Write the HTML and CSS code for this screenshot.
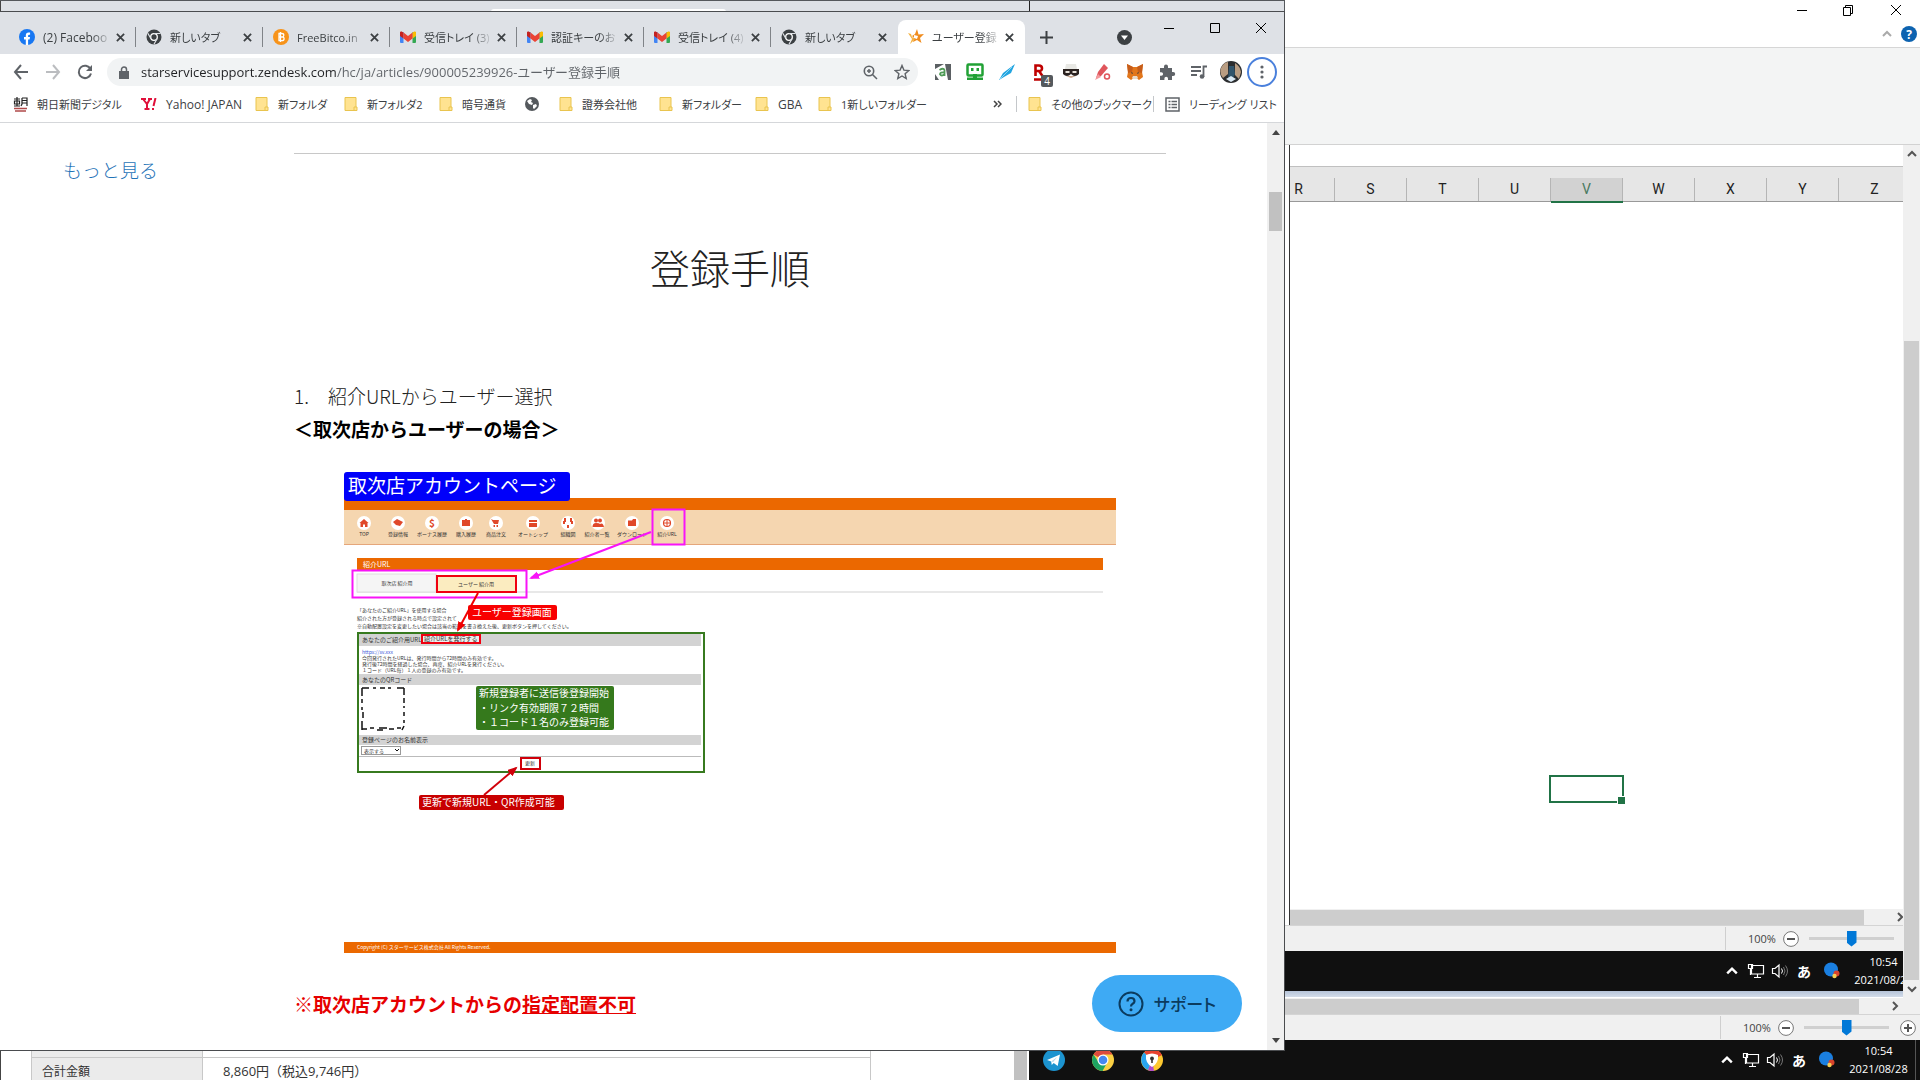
FILE: index.html
```html
<!DOCTYPE html>
<html lang="ja">

<head>
  <meta charset="UTF-8">
  <meta name="viewport" content="width=device-width, initial-scale=1.0">
  <title>ユーザー登録手順</title>
  <link rel="stylesheet" href="styles.css">
</head>

<body>
  <!-- shared icons -->
  <svg class="defs" width="0" height="0">
    <symbol id="x" viewBox="0 0 10 10"><path d="M1 1l8 8M9 1l-8 8" fill="none" stroke="currentColor" stroke-width="2"/></symbol>
    <symbol id="winx" viewBox="0 0 12 12"><path d="M1 1l10 10M11 1L1 11" fill="none" stroke="#000"/></symbol>
    <symbol id="min" viewBox="0 0 12 12"><path d="M1 6.500h10" stroke="#000"/></symbol>
    <symbol id="max" viewBox="0 0 12 12"><path d="M1.500 1.500h9v9h-9z" fill="none" stroke="#000"/></symbol>
    <symbol id="chev" viewBox="0 0 10 10"><path d="M1 7l4-4 4 4" fill="none" stroke="currentColor" stroke-width="2"/></symbol>
    <symbol id="folder" viewBox="0 0 14 16"><path d="M1 1.500h11v13H1z" fill="#ffe391" stroke="#e9c44f"/><path d="M10 11h3v3.500h-3z" fill="#ffe391" stroke="#e9c44f"/></symbol>
    <symbol id="gmail" viewBox="0 0 16 12"><path d="M0 1h3.500v11H1a1 1 0 0 1-1-1z" fill="#4285f4"/><path d="M12.500 1H16v10a1 1 0 0 1-1 1h-2.500z" fill="#34a853"/><path d="M12.500 1.500L15 .3l1 1V5l-3.500 2.500z" fill="#fbbc04"/><path d="M0 5V1.300L1 .3l2.500 1.200v6z" fill="#c5221f"/><path d="M3.500 1.500L8 5l4.500-3.500v6L8 11 3.500 7.500z" fill="#ea4335"/></symbol>
    <symbol id="chromegray" viewBox="0 0 16 16"><circle cx="8" cy="8" r="7.500" fill="#3c4043"/><circle cx="8" cy="8" r="3.300" fill="#3c4043" stroke="#fff" stroke-width="1.300"/><path d="M8 4.500h6.500M5 9.800L1.800 4.200M11 9.800L8 15.300" stroke="#dee1e6" stroke-width="1.200"/></symbol>
    <symbol id="net" viewBox="0 0 18 16"><path d="M4.500 2.500h12v8.500h-12zM10.500 11v3M7 14.500h7M1.500 1.500h4v4h-4zM3.500 5.500V12" fill="none" stroke="#fff" stroke-width="1.200"/></symbol>
    <symbol id="vol" viewBox="0 0 18 16"><path d="M1.500 5.500h2.500L8 2v12L4 10.500H1.500z" fill="none" stroke="#fff" stroke-width="1.200"/><path d="M10.500 5.500q2 2.500 0 5" fill="none" stroke="#fff"/><path d="M12.500 4q3 4 0 8M14.500 2.500q4 5.500 0 11" fill="none" stroke="#777"/></symbol>
    <symbol id="ball" viewBox="0 0 18 18"><circle cx="8" cy="7.500" r="7" fill="#1a7fe0"/><circle cx="13.500" cy="11.500" r="3" fill="#d8432b"/><circle cx="11.500" cy="14" r="2.200" fill="#f7cf52"/></symbol>
    <symbol id="minus" viewBox="0 0 16 16"><circle cx="8" cy="8" r="7.400" fill="#fff" stroke="#777"/><path d="M4 8h8" stroke="#555" stroke-width="2"/></symbol>
    <symbol id="plus" viewBox="0 0 16 16"><circle cx="8" cy="8" r="7.400" fill="#fff" stroke="#777"/><path d="M4 8h8M8 4v8" stroke="#555" stroke-width="2"/></symbol>
  </svg>

  <!-- spreadsheet -->
  <section class="excel">
    <header class="excel-title">
      <div class="excel-controls">
        <button aria-label="最小化"><svg width="12" height="12"><use href="#min"/></svg></button>
        <button aria-label="元に戻す"><svg width="12" height="12" viewBox="0 0 12 12"><path d="M1.500 3.500h7v8h-7zM3.500 3.500v-2h7v8h-2" fill="none" stroke="#000"/></svg></button>
        <button aria-label="閉じる"><svg width="12" height="12"><use href="#winx"/></svg></button>
      </div>
      <div class="excel-help">
        <svg class="light" width="10" height="10"><use href="#chev"/></svg>
        <button class="help">?</button>
      </div>
    </header>
    <div class="ribbon"></div>
    <div class="excel-main">
      <div class="capture">
        <div class="capture-inner">
          <div class="sheet">
            <div class="formula"></div>
            <ul class="cols">
              <li>R</li>
              <li>S</li>
              <li>T</li>
              <li>U</li>
              <li class="sel">V</li>
              <li>W</li>
              <li>X</li>
              <li>Y</li>
              <li>Z</li>
            </ul>
            <div class="cells"><div class="cell-cursor"></div></div>
          </div>
          <div class="hscroll"><div class="hthumb"></div><svg width="10" height="10"><use href="#chev"/></svg></div>
          <div class="status">
            <div class="zoom">
              <label for="zoom1">100%</label>
              <button aria-label="縮小"><svg width="16" height="16"><use href="#minus"/></svg></button>
              <input type="range" id="zoom1">
              <button aria-label="拡大"><svg width="16" height="16"><use href="#plus"/></svg></button>
            </div>
          </div>
          <div class="taskbar">
            <div class="tray">
              <svg class="tray-chev" width="12" height="12"><use href="#chev"/></svg>
              <svg width="18" height="16"><use href="#net"/></svg>
              <svg width="18" height="16"><use href="#vol"/></svg>
              <span class="ime">あ</span>
              <svg class="ball" width="18" height="18"><use href="#ball"/></svg>
              <p class="clock">10:54<br>2021/08/28</p>
            </div>
          </div>
          <div class="strip"></div>
        </div>
      </div>
      <div class="vscroll">
        <svg width="10" height="10"><use href="#chev"/></svg>
        <div class="vthumb"></div>
        <svg class="down" width="10" height="10"><use href="#chev"/></svg>
      </div>
    </div>
    <div class="hscroll"><div class="hthumb"></div><svg width="10" height="10"><use href="#chev"/></svg></div>
    <div class="status">
      <div class="zoom">
        <label for="zoom2">100%</label>
        <button aria-label="縮小"><svg width="16" height="16"><use href="#minus"/></svg></button>
        <input type="range" id="zoom2">
        <button aria-label="拡大"><svg width="16" height="16"><use href="#plus"/></svg></button>
      </div>
    </div>
    <div class="taskbar">
      <div class="apps">
        <button aria-label="Telegram"><svg width="22" height="22" viewBox="0 0 22 22"><circle cx="11" cy="11" r="11" fill="#1c93cf"/><path d="M4 11l13-5.500-2.300 11.500-4-3-2 2-.5-3.500z" fill="#fff"/><path d="M8.200 12.500l6-4.500-4 5z" fill="#b7d8ea"/></svg></button>
        <button aria-label="Chrome"><svg width="22" height="22" viewBox="0 0 22 22"><circle cx="11" cy="11" r="11" fill="#fbd043"/><path d="M11 11L1.500 5.500A11 11 0 0 1 20.500 5.500H11z" fill="#dd4b3e"/><path d="M1.500 5.500A11 11 0 0 0 10.500 22L15.500 13 11 11 6.500 13z" fill="#1da362"/><circle cx="11" cy="11" r="5.500" fill="#fff"/><circle cx="11" cy="11" r="4.300" fill="#4688f1"/></svg></button>
        <button aria-label="セキュリティ"><svg width="22" height="22" viewBox="0 0 22 22"><circle cx="11" cy="11" r="11" fill="#fdc830"/><path d="M11 11L3 3.500A11 11 0 0 1 21 6z" fill="#e8432f"/><path d="M11 11L3 3.500A11 11 0 0 0 7 21z" fill="#28a5f0"/><path d="M11 11L7 21.200A11 11 0 0 0 13 21.800z" fill="#b04ad0"/><path d="M5 6q6-3 12 0 1 8-6 12-7-4-6-12z" fill="#fff"/><circle cx="11" cy="9.500" r="1.900" fill="#333"/><path d="M10.200 10h1.600v4h-1.600z" fill="#333"/></svg></button>
      </div>
      <div class="tray">
        <svg class="tray-chev" width="12" height="12"><use href="#chev"/></svg>
        <svg width="18" height="16"><use href="#net"/></svg>
        <svg width="18" height="16"><use href="#vol"/></svg>
        <span class="ime">あ</span>
        <svg class="ball" width="18" height="18"><use href="#ball"/></svg>
        <p class="clock">10:54<br>2021/08/28</p>
      </div>
    </div>
  </section>

  <!-- order page below the browser -->
  <section class="order">
    <table>
      <tr class="cut"><th></th><td></td></tr>
      <tr><th>合計金額</th><td>8,860円（税込9,746円）</td></tr>
    </table>
    <div class="order-scroll"></div>
  </section>

  <div class="behind"><div class="behind-left"><div class="behind-tab"></div></div></div>

  <!-- browser -->
  <section class="browser">
    <div class="tabstrip">
      <div class="tab"><svg width="16" height="16" viewBox="0 0 16 16"><circle cx="8" cy="8" r="8" fill="#1877f2"/><path d="M6.800 16v-5.500H5V8h1.800V6.500Q6.800 3.500 9.500 3.500h1.600v2.200h-1q-1 0-1 1V8H11l-.4 2.500H9.100V16z" fill="#fff"/></svg><a href="#" class="en">(2) Facebook</a><button aria-label="閉じる"><svg width="9" height="9"><use href="#x"/></svg></button></div>
      <div class="tab"><svg width="16" height="16"><use href="#chromegray"/></svg><a href="#">新しいタブ</a><button aria-label="閉じる"><svg width="9" height="9"><use href="#x"/></svg></button></div>
      <div class="tab"><svg width="16" height="16" viewBox="0 0 16 16"><circle cx="8" cy="8" r="8" fill="#f7931a"/><path d="M6 4.500h2.800q2 0 2 1.700 0 1.300-1.200 1.600 1.500.3 1.500 1.900 0 1.900-2.300 1.900H6zM7.500 3v10M6.500 8h3" fill="none" stroke="#fff" stroke-width="1.300"/></svg><a href="#">FreeBitco.in</a><button aria-label="閉じる"><svg width="9" height="9"><use href="#x"/></svg></button></div>
      <div class="tab"><svg width="16" height="12"><use href="#gmail"/></svg><a href="#">受信トレイ (3)</a><button aria-label="閉じる"><svg width="9" height="9"><use href="#x"/></svg></button></div>
      <div class="tab"><svg width="16" height="12"><use href="#gmail"/></svg><a href="#">認証キーのお</a><button aria-label="閉じる"><svg width="9" height="9"><use href="#x"/></svg></button></div>
      <div class="tab"><svg width="16" height="12"><use href="#gmail"/></svg><a href="#">受信トレイ (4)</a><button aria-label="閉じる"><svg width="9" height="9"><use href="#x"/></svg></button></div>
      <div class="tab last"><svg width="16" height="16"><use href="#chromegray"/></svg><a href="#">新しいタブ</a><button aria-label="閉じる"><svg width="9" height="9"><use href="#x"/></svg></button></div>
      <div class="tab active"><svg width="16" height="16" viewBox="0 0 16 16"><path d="M7 5L9 0l1.500 5.500L16 5l-4 4 1.500 5L9 11l-4 2 1-4-2-2z" fill="#f08c1e"/><path d="M0 4l3 1 1 3 3 2-5 5 2-5z" fill="#f5b342"/><path d="M6 6l4 1-1 3-3-1z" fill="#fff"/></svg><a href="#">ユーザー登録</a><button aria-label="閉じる"><svg width="9" height="9"><use href="#x"/></svg></button></div>
      <button class="newtab" aria-label="新しいタブ"><svg width="13" height="13" viewBox="0 0 13 13"><path d="M6.500 0v13M0 6.500h13" stroke="#3c4043" stroke-width="2"/></svg></button>
      <button class="tabsearch" aria-label="タブを検索"><svg width="15" height="15" viewBox="0 0 15 15"><circle cx="7.500" cy="7.500" r="7.500" fill="#3c4043"/><path d="M4 5.500h7L7.500 10z" fill="#fff"/></svg></button>
      <div class="controls">
        <button aria-label="最小化"><svg width="12" height="12"><use href="#min"/></svg></button>
        <button aria-label="最大化"><svg width="12" height="12"><use href="#max"/></svg></button>
        <button aria-label="閉じる"><svg width="12" height="12"><use href="#winx"/></svg></button>
      </div>
    </div>

    <div class="toolbar">
      <button aria-label="戻る"><svg width="16" height="16" viewBox="0 0 16 16"><path d="M8 1L2 8l6 7M2 8h13" fill="none" stroke="#5f6368" stroke-width="2"/></svg></button>
      <button aria-label="進む"><svg width="16" height="16" viewBox="0 0 16 16"><path d="M8 1l6 7-6 7M14 8H1" fill="none" stroke="#bbbdc0" stroke-width="2"/></svg></button>
      <button aria-label="再読み込み"><svg width="16" height="16" viewBox="0 0 16 16"><path d="M13.500 5A6.200 6.200 0 1 0 14 9.500" fill="none" stroke="#5f6368" stroke-width="2"/><path d="M15 1v6H9z" fill="#5f6368"/></svg></button>
      <div class="omnibox">
        <svg width="10" height="13" viewBox="0 0 10 13"><path d="M0 5h10v8H0z" fill="#5f6368"/><path d="M2.500 5.500V3.500a2.500 2.500 0 0 1 5 0v2" fill="none" stroke="#5f6368" stroke-width="1.500"/></svg>
        <input type="text" aria-label="アドレス" value="starservicesupport.zendesk.com/hc/ja/articles/900005239926-ユーザー登録手順">
        <button aria-label="ズーム"><svg width="15" height="15" viewBox="0 0 15 15"><circle cx="6" cy="6" r="4.700" fill="none" stroke="#5f6368" stroke-width="1.600"/><path d="M9.500 9.500l4.500 4.500M4 6h4M6 4v4" stroke="#5f6368" stroke-width="1.500"/></svg></button>
        <button aria-label="ブックマーク"><svg width="16" height="16" viewBox="0 0 16 16"><path d="M8 1.500l1.900 4.600 4.900.4-3.700 3.200 1.100 4.800L8 12l-4.200 2.500 1.100-4.800L1.200 6.500l4.900-.4z" fill="none" stroke="#5f6368" stroke-width="1.400"/></svg></button>
      </div>
      <div class="exts">
        <button aria-label="alexa"><svg width="18" height="18" viewBox="0 0 18 18"><path d="M1 1h9L1 6zM11 1h6v16h-3zM1 11l4 6H1z" fill="#5b6063"/><path d="M5.500 7q4-2.500 5 0v6M10.500 9.500Q6 9 6 11.300q1.500 2.500 4.500 0" fill="none" stroke="#4f9b57" stroke-width="1.800"/></svg></button>
        <button aria-label="RoboForm"><svg width="18" height="18" viewBox="0 0 18 18"><rect x="1.500" y="1.500" width="15" height="11" rx="1" fill="#fff" stroke="#21a135" stroke-width="2.500"/><path d="M5 5h2.500v3H5zM10.500 5H13v3h-2.500z" fill="#21a135"/><path d="M1 14.500h16v2.500H1zM7 11h4v4H7z" fill="#21a135"/></svg></button>
        <button aria-label="feather"><svg width="18" height="18" viewBox="0 0 18 18"><path d="M1 17L5 10 17 1l-4 9-7 4z" fill="#23a5e0"/><path d="M1 17L14 4" stroke="#8ad4f5"/></svg></button>
        <button class="rakuten" aria-label="Rakuten"><svg width="18" height="18" viewBox="0 0 18 18"><path d="M5.500 13V2.500H9q3 0 3 2.800T9 8H5.500M9 8l3.500 5M4 16.500h9" fill="none" stroke="#bf0000" stroke-width="2.600"/></svg><span>4</span></button>
        <button aria-label="匿名"><svg width="18" height="18" viewBox="0 0 18 18"><path d="M4 1h10l1 5H3z" fill="#e8e8e4"/><path d="M1 6h16v5q-4 4-8 0-4 4-8 0z" fill="#2b2220"/><path d="M3.500 8h4v2h-4zM10.500 8h4v2h-4z" fill="#e7e1da"/><path d="M4 13h10l-5 2z" fill="#c9a68e"/></svg></button>
        <button aria-label="ペン"><svg width="18" height="18" viewBox="0 0 18 18"><path d="M10 1l4 4-7 8-5 2 2-6z" fill="#e0565c"/><path d="M1 17l3-6 3 3z" fill="#f3999c"/><circle cx="13" cy="13.500" r="2.500" fill="#fff" stroke="#e0565c" stroke-width="1.500"/></svg></button>
        <button aria-label="MetaMask"><svg width="18" height="18" viewBox="0 0 18 18"><path d="M1 1l6 3h4l6-3-1 8 1 5-4 3-2-1.500H7L5 17l-4-3 1-5z" fill="#e2761b"/><path d="M1 1l6 3-1 5-4 1zM17 1l-6 3 1 5 4 1z" fill="#c65d1a"/><path d="M7 13h4l1 2-1 1H7l-1-1z" fill="#e9d9c9"/><path d="M5 9l2 1-1 1zM13 9l-2 1 1 1z" fill="#233447"/></svg></button>
        <button aria-label="拡張機能"><svg width="18" height="18" viewBox="0 0 18 18"><path d="M2 5h4V3.500a2 2 0 0 1 4 0V5h4v4h1.200a2 2 0 0 1 0 4H14v4h-4v-1.500a1.800 1.800 0 0 0-3.600 0V17H2v-4.200h1.300a1.800 1.800 0 0 0 0-3.600H2z" fill="#5f6368"/></svg></button>
        <button aria-label="メディア"><svg width="18" height="18" viewBox="0 0 18 18"><path d="M1 4h10M1 8h10M1 12h6M13.500 14V3.500H17" fill="none" stroke="#5f6368" stroke-width="1.800"/><circle cx="12" cy="13.500" r="2.300" fill="#5f6368"/></svg></button>
        <button aria-label="プロフィール"><svg width="22" height="22" viewBox="0 0 22 22"><circle cx="11" cy="11" r="11" fill="#2b2d2f"/><path d="M1 7q3-6 7-6v12l-5 4q-4-5-2-10zM15 2q5 3 6 9l-2 7-4-4z" fill="#b99d82"/><path d="M9 5h5l1 8-3 6H8z" fill="#31556c"/><path d="M6 18l5-3 5 3-5 3z" fill="#dbeaf5"/></svg></button>
        <button class="menu" aria-label="メニュー"><svg width="4" height="14" viewBox="0 0 4 14"><circle cx="2" cy="2" r="1.600" fill="#5f6368"/><circle cx="2" cy="7" r="1.600" fill="#5f6368"/><circle cx="2" cy="12" r="1.600" fill="#5f6368"/></svg></button>
      </div>
    </div>

    <nav class="bookmarks">
      <a href="#"><svg width="15" height="15" viewBox="0 0 15 15"><path d="M1 2h6M4 0v9M1.500 4h5v3h-5zM1 9h6M9 1h5v8M9 1v6l-1 2M9 3.500h5M9 6h5" fill="none" stroke="#222" stroke-width="1.200"/><path d="M1 11.500h13M2 14h11" stroke="#b04a4a" stroke-width="1.500"/></svg>朝日新聞デジタル</a>
      <a href="#" class="en"><svg width="16" height="12" viewBox="0 0 16 12"><path d="M0 1h5M7 1h4M2 1l4 5 3-5M6 6v5M3.500 11h5" fill="none" stroke="#e0103a" stroke-width="2"/><path d="M14.500 0l-2 8M12 10v2" stroke="#e0103a" stroke-width="2"/></svg>Yahoo! JAPAN</a>
      <a href="#"><svg width="14" height="16"><use href="#folder"/></svg>新フォルダ</a>
      <a href="#"><svg width="14" height="16"><use href="#folder"/></svg>新フォルダ2</a>
      <a href="#"><svg width="14" height="16"><use href="#folder"/></svg>暗号通貨</a>
      <a href="#" aria-label="サイト"><svg width="14" height="14" viewBox="0 0 14 14"><circle cx="7" cy="7" r="7" fill="#55595d"/><path d="M2 4l3-2 2 1-1 2 2 1-1 2-3-1zM8 8l3-1 1 2-3 3-1-1z" fill="#fff"/></svg></a>
      <a href="#"><svg width="14" height="16"><use href="#folder"/></svg>證券会社他</a>
      <a href="#"><svg width="14" height="16"><use href="#folder"/></svg>新フォルダー</a>
      <a href="#" class="en"><svg width="14" height="16"><use href="#folder"/></svg>GBA</a>
      <a href="#"><svg width="14" height="16"><use href="#folder"/></svg>1新しいフォルダー</a>
      <button class="more" aria-label="他のブックマーク"><svg width="9" height="8" viewBox="0 0 9 8"><path d="M1 1l3 3-3 3M5 1l3 3-3 3" fill="none" stroke="#444" stroke-width="1.500"/></svg></button>
      <a href="#" class="split"><svg width="14" height="16"><use href="#folder"/></svg>その他のブックマーク</a>
      <a href="#" class="split"><svg width="15" height="15" viewBox="0 0 15 15"><path d="M1 1h13v13H1z" fill="none" stroke="#5f6368" stroke-width="1.500"/><path d="M3.500 4.500h2M3.500 7.500h2M3.500 10.500h2M6.500 4.500H12M6.500 7.500H12M6.500 10.500H12" stroke="#5f6368" stroke-width="1.500"/></svg>リーディング リスト</a>
    </nav>

    <div class="view">
      <main class="page">
        <aside><a href="#">もっと見る</a></aside>
        <article>
          <hr>
          <h1>登録手順</h1>
          <p>1.　紹介URLからユーザー選択</p>
          <p class="strong">＜取次店からユーザーの場合＞</p>
          <svg class="figure" viewBox="0 0 772 482">
            <defs>
              <marker id="am" markerWidth="12" markerHeight="10" refX="8" refY="4" orient="auto" markerUnits="userSpaceOnUse"><path d="M0 0l10 4-10 4z" fill="#f814f8"/></marker>
              <marker id="ar" markerWidth="12" markerHeight="10" refX="8" refY="4" orient="auto" markerUnits="userSpaceOnUse"><path d="M0 0l10 4-10 4z" fill="#f00000"/></marker>
              <marker id="ad" markerWidth="12" markerHeight="10" refX="8" refY="4" orient="auto" markerUnits="userSpaceOnUse"><path d="M0 0l10 4-10 4z" fill="#d0000a"/></marker>
            </defs>
            <path d="M0 27h772v12H0z" fill="#eb6800"/>
            <path d="M0 39h772v34H0z" fill="#f5d6b0"/>
            <path d="M0 73.500h772" stroke="#e5a67a"/>
            <rect x="0" y="1" width="226" height="29" rx="3" fill="#0000fa"/>
            <text class="big" x="4" y="22">取次店アカウントページ</text>
            <g fill="#fff">
              <circle cx="20" cy="52" r="7"/><circle cx="54" cy="52" r="7"/><circle cx="88" cy="52" r="7"/><circle cx="122" cy="52" r="7"/><circle cx="152" cy="52" r="7"/><circle cx="189" cy="52" r="7"/><circle cx="224" cy="52" r="7"/><circle cx="254" cy="52" r="7"/><circle cx="288" cy="52" r="7"/><circle cx="323" cy="52" r="7"/>
            </g>
            <g fill="#e0482a">
              <path d="M15.500 52l4.500-4 4.500 4h-1v4h-2.500v-2.500h-2V56h-2.500v-4z"/>
              <path d="M49 51l4-3 6 3-3 4-4-1z"/>
              <path d="M118 49h3v-1h2v1h3v6h-8z"/>
              <path d="M147 48l2 1h6l-1 4h-4zM149.500 54h1.500v2h-1.500zM152.500 54h1.500v2h-1.500z"/>
              <path d="M185 49h8v2h-8zM185 52h8v4h-8z"/>
              <path d="M220 47h2v4h-2zM226 47h2v4h-2zM223 54h2v3h-2zM219 50h2v3h-2zM227 50h2v3h-2z"/>
              <circle cx="252" cy="49.500" r="2"/><circle cx="256" cy="49.500" r="2"/><path d="M248.500 56q0-4 3.500-4t4 1q3-2 4 3z"/>
              <path d="M284 49.500h4l1-1.500h3v7h-8z"/>
            </g>
            <circle cx="323" cy="52" r="3.500" fill="none" stroke="#e0482a" stroke-width="1.200"/><path d="M319.500 52h7M323 48.500v7" stroke="#e0482a"/>
            <text class="dollar" x="88" y="56">$</text>
            <g class="nav">
              <text x="20" y="65">TOP</text><text x="54" y="65">登録情報</text><text x="88" y="65">ボーナス履歴</text><text x="122" y="65">購入履歴</text><text x="152" y="65">商品注文</text><text x="189" y="65">オートシップ</text><text x="224" y="65">組織図</text><text x="253" y="65">紹介者一覧</text><text x="288" y="65">ダウンロード</text><text x="323" y="65">紹介URL</text>
            </g>
            <rect x="13" y="87" width="746" height="12" fill="#eb6800"/>
            <text class="wh7" x="19" y="96">紹介URL</text>
            <path d="M13 121h746" stroke="#e8e8e8" stroke-width="2"/>
            <rect x="13" y="103" width="79" height="18" fill="#f5f5f5" stroke="#ddd"/>
            <rect x="93" y="105" width="79" height="16" fill="#fbecc0" stroke="#f00010" stroke-width="2"/>
            <g class="nav"><text x="53" y="114">取次店 紹介用</text><text x="132" y="115">ユーザー 紹介用</text></g>
            <path d="M308.500 38.500h32v35h-32zM8.500 99.500h174v27H8.500z" fill="none" stroke="#f814f8" stroke-width="2"/>
            <path d="M307 61L187 107" stroke="#f814f8" stroke-width="2" marker-end="url(#am)"/>
            <g class="small">
              <text x="13" y="141">「あなたのご紹介URL」を使用する場合</text>
              <text x="13" y="149">紹介された方が登録される時点で設定されて</text>
              <text x="13" y="157">※自動配置設定を変更したい場合は該当の範囲を書き換えた後、更新ボタンを押してください。</text>
            </g>
            <rect x="124" y="134" width="89" height="15" rx="2" fill="#f80000"/>
            <text class="label" x="128" y="145">ユーザー登録画面</text>
            <rect x="14" y="162" width="346" height="139" fill="#fff" stroke="#377a1f" stroke-width="2"/>
            <path d="M15 163h342v12H15zM15 203h342v11H15zM15 264h342v10H15z" fill="#d3d3d3"/>
            <g class="head"><text x="18" y="171">あなたのご紹介用URL</text><text x="18" y="211">あなたのQRコード</text><text x="18" y="271">登録ページのお名前表示</text></g>
            <rect x="78" y="164" width="58" height="8" fill="#eee" stroke="#f00010" stroke-width="2"/>
            <text class="head" x="80" y="170">紹介URLを発行する</text>
            <path d="M134 122l-20 37" stroke="#f00000" stroke-width="2" marker-end="url(#ar)"/>
            <g class="small">
              <text class="link" x="18" y="183">https://sv.xxx</text>
              <text x="18" y="189">今回発行されたURLは、発行時間から72時間のみ有効です。</text>
              <text x="18" y="195">発行後72時間を経過した場合、再度、紹介URLを発行ください。</text>
              <text x="18" y="201">１コード（URL毎）１人の登録のみ有効です。</text>
            </g>
            <path d="M18 217h7M29 217h3M36 217h5M44 217h3M53 217h7M60 217v7M60 227v5M60 235v2M60 241v4M60 249v3M60 255l-2 4M18 217v8M18 228v4M18 236v3M19 241v6M18 250v9M18 258h5M26 257h4M33 259h6M35 257h8M45 258h5M53 257h4" fill="none" stroke="#111" stroke-width="1.500"/>
            <rect x="132" y="215" width="138" height="44" rx="2" fill="#35791c"/>
            <g class="label"><text x="135" y="226">新規登録者に送信後登録開始</text><text x="135" y="241">・リンク有効期限７２時間</text><text x="135" y="255">・１コード１名のみ登録可能</text></g>
            <rect x="17.500" y="275.500" width="39" height="8" fill="#fff" stroke="#999"/>
            <text class="small" x="20" y="282">表示する</text>
            <path d="M51 278l2 2 2-2" fill="none" stroke="#111"/>
            <path d="M15 285.500h342" stroke="#bbb"/>
            <rect x="177" y="287" width="19" height="11" fill="#fff" stroke="#d0000a" stroke-width="2"/>
            <text class="small" x="181" y="294">更新</text>
            <path d="M140 324l32-27" stroke="#d0000a" stroke-width="2" marker-end="url(#ad)"/>
            <rect x="75" y="324" width="145" height="15" rx="2" fill="#c80000"/>
            <text class="label" x="78" y="335">更新で新規URL・QR作成可能</text>
            <path d="M0 471h772v11H0z" fill="#eb6800"/>
            <text class="copy" x="13" y="478">Copyright (C) スターサービス株式会社 All Rights Reserved.</text>
          </svg>
          <p class="strong red">※取次店アカウントからの<u>指定配置不可</u></p>
        </article>
        <button class="support"><svg width="26" height="26" viewBox="0 0 26 26"><circle cx="13" cy="13" r="11.500" fill="none" stroke="#0b3b5e" stroke-width="2"/><path d="M9.500 10.500Q9.500 7 13 7t3.500 3.200q0 1.500-1.800 2.600T13 15.500" fill="none" stroke="#0b3b5e" stroke-width="2.200"/><circle cx="13" cy="18.800" r="1.500" fill="#0b3b5e"/></svg>サポート</button>
      </main>
      <div class="page-scroll">
        <svg width="8" height="5" viewBox="0 0 8 5"><path d="M0 5l4-5 4 5z" fill="#444"/></svg>
        <div class="page-thumb"></div>
        <svg class="down" width="8" height="5" viewBox="0 0 8 5"><path d="M0 5l4-5 4 5z" fill="#444"/></svg>
      </div>
    </div>
  </section>
</body>

</html>
```
FILE: styles.css
```css
* {
  margin: 0;
  padding: 0;
  box-sizing: border-box;
}

body {
  position: relative;
  height: 100vh;
  overflow: hidden;
  background: #fff;
  font-family: "Open Sans", "Noto Sans CJK JP", sans-serif;
  font-size: 12px;
  color: #3c4043;
}

ul {
  list-style: none;
}

a {
  color: inherit;
  text-decoration: none;
}

button {
  border: 0;
  background: none;
  font: inherit;
  color: inherit;
  display: flex;
  align-items: center;
  justify-content: center;
}

svg {
  flex: none;
  display: block;
}

.defs {
  position: absolute;
}

.down {
  transform: rotate(180deg);
}

/* windows */
.browser {
  position: absolute;
  left: 0;
  top: 11px;
  bottom: 29px;
  width: 1285px;
  display: flex;
  flex-direction: column;
  background: #fff;
  border: 1px solid #4a4c4f;
  border-left: 0;
}

.excel {
  position: absolute;
  left: 1029px;
  right: 0;
  top: 0;
  bottom: 0;
  display: flex;
  flex-direction: column;
  background: #fff;
}

.order {
  position: absolute;
  left: 0;
  bottom: 0;
  width: 1029px;
  height: 30px;
  display: flex;
  justify-content: space-between;
  overflow: hidden;
  background: #fff;
  border-left: 1px solid #444;
}

.behind {
  position: absolute;
  left: 0;
  top: 0;
  width: 1285px;
  height: 12px;
  background: #dee1e6;
  border-top: 1px solid #55585c;
  border-right: 1px solid #55585c;
}

.behind-left {
  width: 1030px;
  height: 11px;
  padding: 8px 0 0 490px;
  border-right: 1px solid #222;
  border-left: 1px solid #444;
}

.behind-tab {
  width: 235px;
  height: 3px;
  background: #fff;
  border-radius: 3px 3px 0 0;
}

/* tabs */
.tabstrip {
  display: flex;
  height: 42px;
  padding: 8px 0 0 9px;
  background: #dee1e6;
}

.tab {
  flex: none;
  width: 127px;
  height: 34px;
  display: flex;
  align-items: center;
  gap: 8px;
  padding: 0 11px 0 10px;
  background: linear-gradient(#808388, #808388) right center / 1px 20px no-repeat;
}

.tab.last {
  background: none;
}

.tab a {
  flex: 1;
  overflow: hidden;
  white-space: nowrap;
  font-size: 11px;
  font-feature-settings: "palt";
  -webkit-mask-image: linear-gradient(90deg, #000 75%, rgba(0, 0, 0, .2));
  mask-image: linear-gradient(90deg, #000 75%, rgba(0, 0, 0, .2));
}

.tab .en,
.bookmarks .en {
  font-size: 12px;
}

.tab.active {
  background: #fff;
  border-radius: 8px 8px 0 0;
}

.newtab {
  width: 42px;
}

.tabsearch {
  width: 30px;
  margin-left: 42px;
}

.controls {
  display: flex;
  height: 16px;
  margin-left: auto;
}

.controls button {
  width: 46px;
}

/* toolbar */
.toolbar {
  display: flex;
  align-items: center;
  height: 36px;
  padding: 0 7px 0 5px;
}

.toolbar button {
  width: 32px;
  height: 30px;
}

.omnibox {
  flex: 1;
  display: flex;
  align-items: center;
  gap: 12px;
  height: 28px;
  margin: 0 9px 0 6px;
  padding-left: 12px;
  border-radius: 14px;
  background: #f1f3f4;
}

.omnibox button {
  margin-left: -12px;
}

.omnibox input {
  flex: 1;
  min-width: 0;
  height: 24px;
  padding-bottom: 2px;
  border: 0;
  outline: 0;
  font: 13px "Open Sans", "Noto Sans CJK JP", sans-serif;
  font-feature-settings: "palt";
  color: transparent;
  background: linear-gradient(90deg, #202124 196px, #5f6368 196px);
  -webkit-background-clip: text;
  background-clip: text;
}

.exts {
  display: flex;
}

.rakuten {
  position: relative;
}

.rakuten span {
  position: absolute;
  right: 2px;
  bottom: 0;
  width: 12px;
  line-height: 12px;
  border-radius: 2px;
  background: #55595d;
  color: #fff;
  font-size: 10px;
}

.toolbar .menu {
  width: 30px;
  border: 2px solid #4a80dc;
  border-radius: 50%;
}

.bookmarks {
  display: grid;
  grid-template-columns: 128px 114px 89px 95px 86px 34px 100px 96px 63px 160px 38px 137px 1fr;
  align-items: center;
  height: 33px;
  padding: 0 0 4px 13px;
  border-bottom: 1px solid #d5d7da;
  white-space: nowrap;
  font-size: 11px;
  font-feature-settings: "palt";
}

.bookmarks a {
  display: flex;
  align-items: center;
  gap: 9px;
}

.bookmarks .split {
  padding-left: 11px;
  border-left: 1px solid #c4c7ca;
}

/* article */
.view {
  flex: 1;
  min-height: 0;
  display: flex;
}

.page {
  flex: 1;
  position: relative;
  display: flex;
  overflow: hidden;
  font-family: "Noto Sans CJK JP", sans-serif;
  font-size: 19px;
  line-height: 33px;
}

.page aside {
  width: 294px;
  padding: 30px 0 0 63px;
  color: #1f73b7;
  font-weight: 300;
}

.page article {
  width: 872px;
  padding-top: 30px;
  color: #222;
  font-weight: 300;
}

.page hr {
  border: 0;
  border-top: 1px solid #c8c8c8;
}

.page h1 {
  margin: 83px 0 82px;
  font-size: 40px;
  line-height: 60px;
  font-weight: 300;
  text-align: center;
}

.page .strong {
  font-weight: bold;
  color: #000;
}

.page .red {
  margin-top: 34px;
  color: #e60000;
}

.figure {
  width: 772px;
  margin: 26px 0 0 50px;
}

.figure text {
  font-family: "Noto Sans CJK JP", sans-serif;
  font-weight: 400;
  fill: #333;
}

.figure .big {
  font-size: 19px;
  fill: #fff;
}

.figure .label,
.figure .label text {
  font-size: 10px;
  fill: #fff;
}

.figure .nav text {
  font-size: 5px;
  text-anchor: middle;
}

.figure .small,
.figure .small text {
  font-size: 5px;
}

.figure .head,
.figure .head text {
  font-size: 6px;
}

.figure .wh7 {
  font-size: 7px;
  fill: #fff;
}

.figure .copy {
  font-size: 5px;
  fill: #fff;
}

.figure .dollar {
  font-size: 10px;
  font-weight: bold;
  text-anchor: middle;
  fill: #e0482a;
}

.figure .small .link {
  fill: #3b56d8;
}

.support {
  position: absolute;
  right: 25px;
  bottom: 18px;
  width: 150px;
  height: 57px;
  gap: 10px;
  border-radius: 29px;
  background: #3eaaf4;
  color: #0b3b5e;
  font-size: 17px;
  font-weight: 500;
  font-feature-settings: "palt";
}

.page-scroll {
  display: flex;
  flex-direction: column;
  align-items: center;
  width: 17px;
  padding: 7px 0;
  background: #f0f0f0;
}

.page-thumb {
  width: 13px;
  height: 39px;
  margin: 57px 0 auto;
  background: #c1c1c1;
}

/* excel */
.excel-title {
  height: 48px;
  border-bottom: 1px solid #d6d6d6;
}

.excel-controls {
  display: flex;
  justify-content: flex-end;
  height: 20px;
}

.excel-controls button {
  width: 46px;
}

.excel-controls button:last-child {
  width: 49px;
}

.excel-help {
  display: flex;
  align-items: center;
  justify-content: flex-end;
  gap: 9px;
  height: 28px;
  padding-right: 3px;
}

.light {
  color: #aaa;
}

.help {
  width: 16px;
  height: 16px;
  border-radius: 50%;
  background: #0d63b0;
  color: #fff;
  font-weight: bold;
}

.ribbon {
  height: 97px;
  background: #f3f4f4;
  border-bottom: 1px solid #d2d2d2;
}

.excel-main {
  flex: 1;
  min-height: 0;
  display: flex;
  padding-left: 256px;
}

.capture {
  flex: 1;
  min-width: 0;
  overflow: hidden;
}

/* the captured desktop is wider than its frame and is cut on the right */
.capture-inner {
  height: 100%;
  margin-right: -22px;
  display: flex;
  flex-direction: column;
}

.sheet {
  flex: 1;
  display: flex;
  flex-direction: column;
  margin-left: 4px;
  overflow: hidden;
  border-left: 1px solid #333;
}

.sheet + .hscroll {
  margin-left: 4px;
  border-left: 1px solid #333;
}

.formula {
  height: 21px;
}

.cols {
  display: flex;
  height: 36px;
  padding-top: 11px;
  background: #e6e6e6;
  border-top: 1px solid #c0c0c0;
  border-bottom: 1px solid #999;
}

.cols li {
  flex: none;
  width: 72px;
  line-height: 23px;
  text-align: center;
  font-size: 14px;
  font-family: Roboto, sans-serif;
  color: #222;
  border-right: 1px solid #b5b5b5;
}

.cols li:first-child {
  margin-left: -27px;
}

.cols .sel {
  background: #d2d2d2;
  color: #4a7a61;
  box-shadow: 0 2px #217346;
}

.cells {
  flex: 1;
  padding: 573px 0 0 259px;
}

.cell-cursor {
  position: relative;
  width: 75px;
  height: 28px;
  border: 2px solid #217346;
}

.cell-cursor::after {
  content: "";
  position: absolute;
  right: -4px;
  bottom: -4px;
  width: 7px;
  height: 7px;
  background: #217346;
  border: 1px solid #fff;
}

.hscroll {
  display: flex;
  align-items: center;
  gap: 31px;
  height: 16px;
  padding-right: 20px;
  background: #f0f0f0;
  color: #555;
}

.hscroll svg {
  transform: rotate(90deg);
}

.hthumb {
  flex: 1;
  height: 15px;
  background: #cdcdcd;
}

.status {
  display: flex;
  justify-content: flex-end;
  height: 26px;
  background: #f0f0f0;
  border-top: 1px solid #d4d4d4;
}

.zoom {
  display: flex;
  align-items: center;
  height: 23px;
  margin-top: 1px;
  padding: 0 4px 0 22px;
  border-left: 1px solid #cfcfcf;
  color: #444;
}

.zoom label {
  width: 35px;
  font-size: 11px;
}

.zoom input {
  -webkit-appearance: none;
  appearance: none;
  width: 85px;
  height: 16px;
  margin: 0 11px 0 10px;
  background: linear-gradient(#d0d0d0, #d0d0d0) center / 100% 3px no-repeat;
}

.zoom input::-webkit-slider-thumb {
  -webkit-appearance: none;
  width: 10px;
  height: 16px;
  background: #0078d7;
  clip-path: polygon(0 0, 100% 0, 100% 75%, 50% 100%, 0 75%);
}

.taskbar {
  display: flex;
  height: 40px;
  background: #101010;
  color: #fff;
}

.apps {
  display: flex;
}

.apps button {
  width: 49px;
}

.tray {
  display: flex;
  align-items: center;
  gap: 6px;
  margin-left: auto;
  padding-right: 4px;
}

.tray-chev {
  margin-right: 3px;
}

.ime {
  width: 18px;
  font-size: 14px;
  font-weight: bold;
  text-align: center;
}

.ball {
  margin-left: 4px;
}

.clock {
  width: 74px;
  height: 40px;
  padding: 2px 0;
  line-height: 18px;
  font-size: 11px;
  text-align: center;
  border-right: 1px solid #555;
}

.strip {
  height: 7px;
  background: linear-gradient(#b5c3d8, #d3dce9);
  border-bottom: 1px solid #fff;
}

.vscroll {
  display: flex;
  flex-direction: column;
  align-items: center;
  width: 17px;
  padding: 4px 0;
  background: #f0f0f0;
  color: #555;
}

.vthumb {
  width: 15px;
  flex: 1;
  margin: 182px 0 4px;
  background: #cdcdcd;
}

/* order table */
.order table {
  width: 840px;
  margin-left: 30px;
  border-collapse: collapse;
  font: 13px "Open Sans", "Noto Sans CJK JP", sans-serif;
  color: #333;
}

.order th,
.order td {
  height: 30px;
  padding: 0 0 4px 20px;
  border: 1px solid #c8c8c8;
  text-align: left;
  font-weight: normal;
}

.order th {
  width: 171px;
  padding-left: 10px;
  font-size: 12px;
  background: #ebebeb;
}

.order .cut th,
.order .cut td {
  height: 7px;
  padding: 0;
}

.order-scroll {
  width: 15px;
  background: #c1c1c1;
  border-right: 2px solid #fff;
}
```
